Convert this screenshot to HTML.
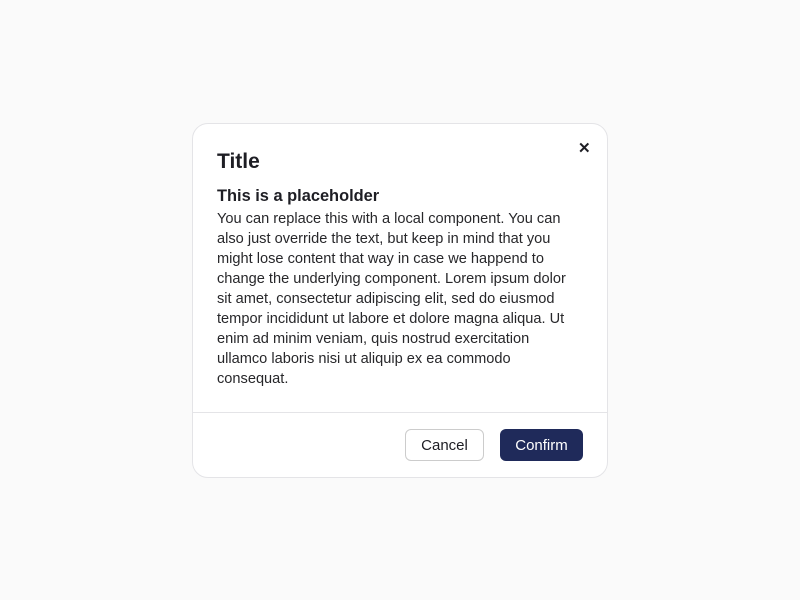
<!DOCTYPE html>
<html><head><style>
body{margin:0;background:#fafafa;font-family:"Liberation Sans",sans-serif;color:#1e1e24;}
.d{position:absolute;left:192px;top:123px;width:414px;height:353px;background:#fff;border:1px solid #e4e4e7;border-radius:16px;}
.t{position:absolute;left:24px;top:24px;font-size:21px;font-weight:bold;line-height:28px;}
.x{position:absolute;left:385px;top:16px;font-size:15px;line-height:18px;font-weight:bold;}
.s{position:absolute;left:24px;top:61px;font-size:16.4px;font-weight:bold;line-height:22px;}
.b{position:absolute;left:24px;top:85px;font-size:14.6px;line-height:20px;white-space:nowrap;color:#27272a;}
.hr{position:absolute;left:0;right:0;top:288px;border-top:1px solid #e4e4e7;}
.btn{position:absolute;top:305px;height:30px;border-radius:6px;font-size:15px;line-height:32px;text-align:center;}
.c{left:212px;width:77px;border:1px solid #ccc;background:#fff;}
.f{left:307px;width:83px;height:32px;line-height:34px;background:#1f2a5a;color:#fff;}
</style></head><body>
<div class="d">
<div class="t">Title</div>
<div class="x">✕</div>
<div class="s">This is a placeholder</div>
<div class="b">You can replace this with a local component. You can<br>also just override the text, but keep in mind that you<br>might lose content that way in case we happend to<br>change the underlying component. Lorem ipsum dolor<br>sit amet, consectetur adipiscing elit, sed do eiusmod<br>tempor incididunt ut labore et dolore magna aliqua. Ut<br>enim ad minim veniam, quis nostrud exercitation<br>ullamco laboris nisi ut aliquip ex ea commodo<br>consequat.</div>
<div class="hr"></div>
<div class="btn c">Cancel</div>
<div class="btn f">Confirm</div>
</div>
</body></html>
